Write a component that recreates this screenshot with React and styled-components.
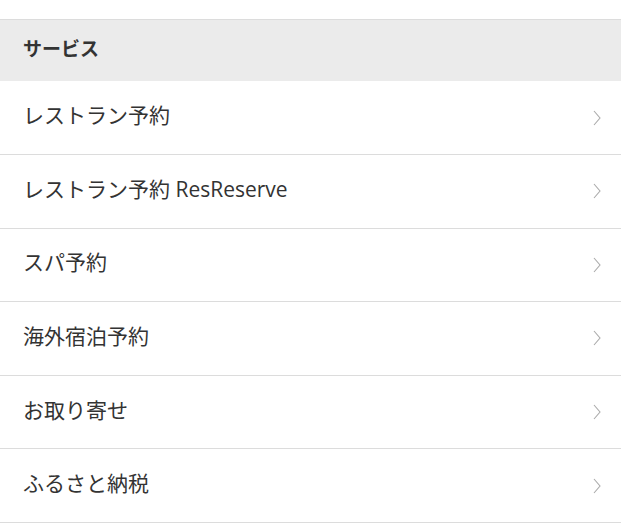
import React from "react";
import styled, { createGlobalStyle } from "styled-components";

const Global = createGlobalStyle`
  html, body { margin: 0; padding: 0; background: #fff; }
  body { font-family: "Open Sans", "Noto Sans CJK JP", sans-serif; color: #333; }
`;

const Page = styled.div`
  padding-top: 19px;
`;

const Header = styled.h2`
  margin: 0;
  height: 61.4px;
  box-sizing: content-box;
  border-top: 1px solid #dcdcdc;
  background: #ebebeb;
  display: flex;
  align-items: center;
  padding: 0 0 0 23px;
  font-family: "Noto Sans CJK JP", sans-serif;
  font-size: 19px;
  font-weight: 700;
  color: #333;
`;

const HeaderText = styled.span`
  line-height: 1;
  margin-bottom: 7px;
`;

const List = styled.ul`
  list-style: none;
  margin: 0;
  padding: 0;
`;

const Row = styled.li`
  height: 72.6px;
  border-bottom: 1px solid #dcdcdc;
  display: flex;
  align-items: center;
  justify-content: space-between;
  padding: 0 20px 0 23px;
  font-size: 21px;
  color: #333;
  cursor: pointer;
`;

const Label = styled.span`
  line-height: 1;
  margin-bottom: 4px;
`;

const Chevron = () => (
  <svg width="8" height="16" viewBox="0 0 8 16" fill="none">
    <path d="M1 1 L7 8 L1 15" stroke="#aaa" strokeWidth="1.1" />
  </svg>
);

const items = [
  "レストラン予約",
  "レストラン予約 ResReserve",
  "スパ予約",
  "海外宿泊予約",
  "お取り寄せ",
  "ふるさと納税",
];

export default function App() {
  return (
    <Page>
      <Global />
      <Header>
        <HeaderText>サービス</HeaderText>
      </Header>
      <List>
        {items.map((t) => (
          <Row key={t}>
            <Label>{t}</Label>
            <Chevron />
          </Row>
        ))}
      </List>
    </Page>
  );
}
